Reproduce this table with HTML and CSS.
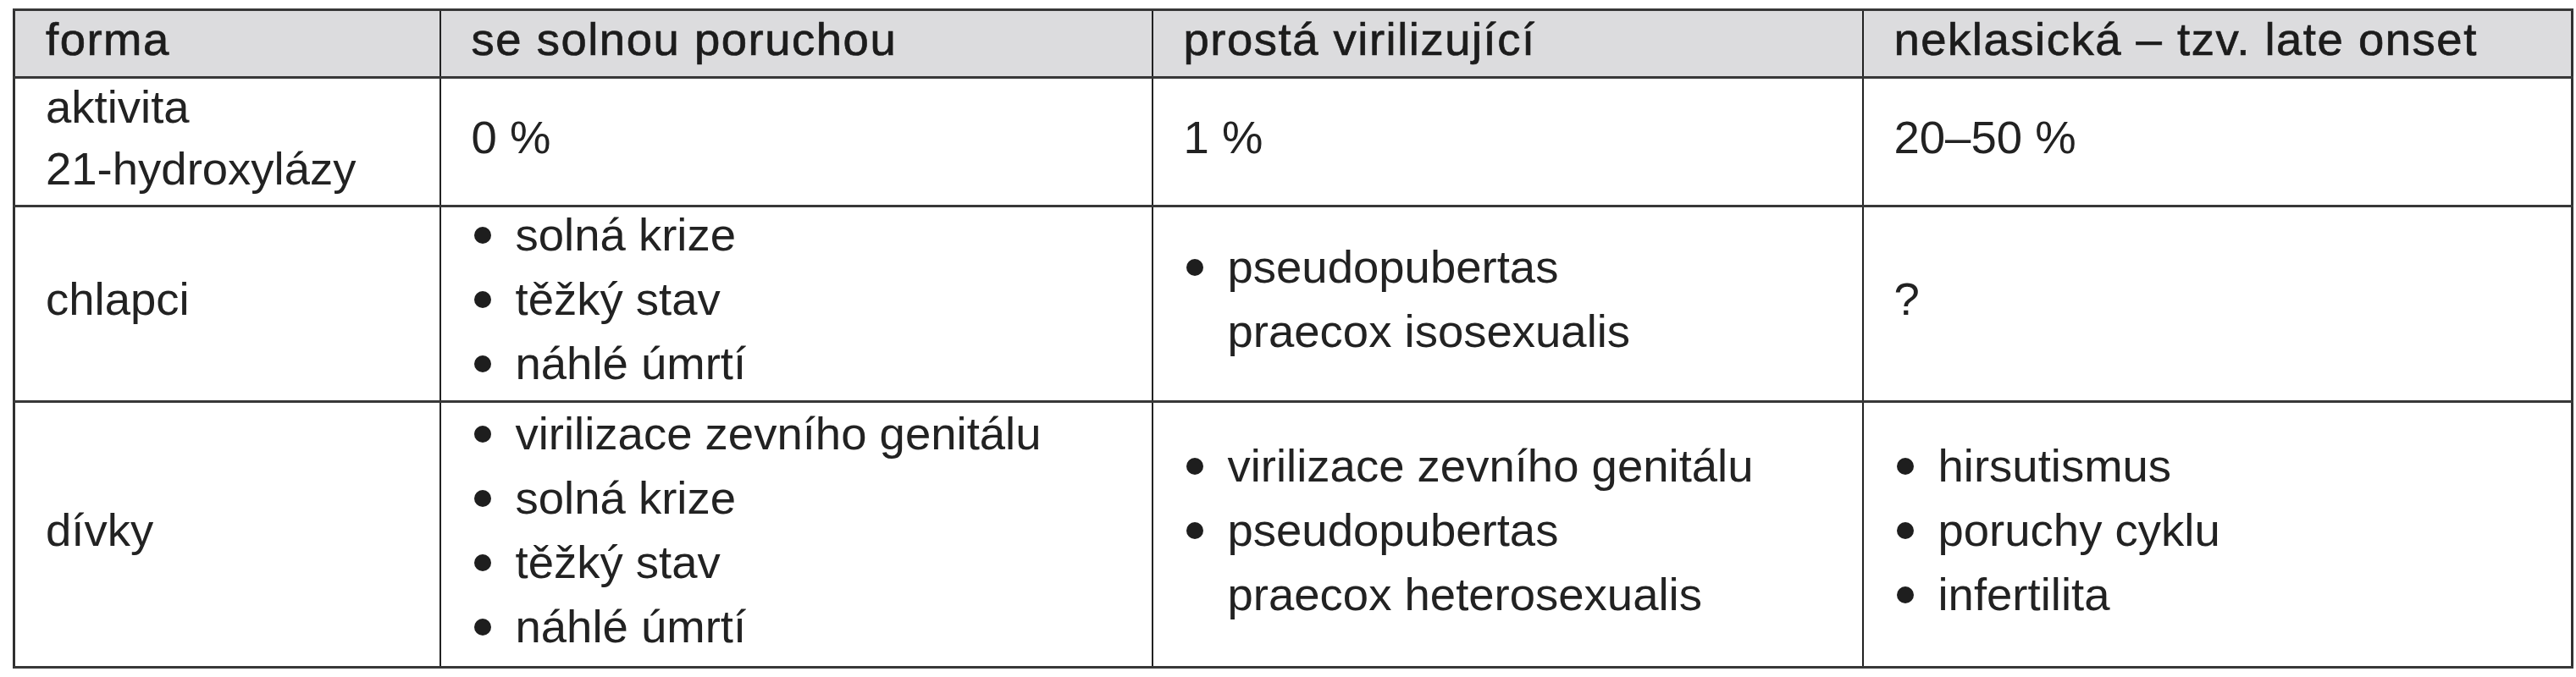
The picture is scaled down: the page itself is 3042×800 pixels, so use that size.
FILE: index.html
```html
<!DOCTYPE html>
<html lang="cs">
<head>
<meta charset="utf-8">
<title>Formy CAH</title>
<link rel="stylesheet" href="styles.css">
</head>
<body>
<table class="t">
  <colgroup>
    <col class="c1">
    <col class="c2">
    <col class="c3">
    <col class="c4">
  </colgroup>
  <thead>
    <tr class="rh">
      <th><div class="in">forma</div></th>
      <th><div class="in">se solnou poruchou</div></th>
      <th><div class="in">prostá virilizující</div></th>
      <th><div class="in">neklasická – tzv. late onset</div></th>
    </tr>
  </thead>
  <tbody>
    <tr class="r1">
      <td><div class="in tight">aktivita<br>21-hydroxylázy</div></td>
      <td><div class="in">0 %</div></td>
      <td><div class="in">1 %</div></td>
      <td><div class="in">20–50 %</div></td>
    </tr>
    <tr class="r2">
      <td><div class="in">chlapci</div></td>
      <td>
        <ul class="in list">
          <li><span>solná krize</span></li>
          <li><span>těžký stav</span></li>
          <li><span>náhlé úmrtí</span></li>
        </ul>
      </td>
      <td>
        <ul class="in list">
          <li><span>pseudopubertas<br>praecox isosexualis</span></li>
        </ul>
      </td>
      <td><div class="in">?</div></td>
    </tr>
    <tr class="r3">
      <td><div class="in">dívky</div></td>
      <td>
        <ul class="in list">
          <li><span>virilizace zevního genitálu</span></li>
          <li><span>solná krize</span></li>
          <li><span>těžký stav</span></li>
          <li><span>náhlé úmrtí</span></li>
        </ul>
      </td>
      <td>
        <ul class="in list">
          <li><span>virilizace zevního genitálu</span></li>
          <li><span>pseudopubertas<br>praecox heterosexualis</span></li>
        </ul>
      </td>
      <td>
        <ul class="in list">
          <li><span>hirsutismus</span></li>
          <li><span>poruchy cyklu</span></li>
          <li><span>infertilita</span></li>
        </ul>
      </td>
    </tr>
  </tbody>
</table>
</body>
</html>
```
FILE: styles.css
```css
html, body {
  margin: 0;
  padding: 0;
  background: #ffffff;
}

body {
  font-family: "Liberation Sans", Arial, sans-serif;
  color: #222222;
}

.t {
  margin: 10px 0 0 15px;
  width: 3024px;
  table-layout: fixed;
  border-collapse: collapse;
  border: 3px solid #303030;
}

.c1 { width: 503px; }
.c2 { width: 841px; }
.c3 { width: 839px; }

.t th,
.t td {
  padding: 0 30px 0 36px;
  vertical-align: middle;
  text-align: left;
  border-left: 2px solid #222222;
  border-right: 2px solid #222222;
  border-top: 3px solid #383838;
  border-bottom: 3px solid #383838;
  font-size: 54.5px;
  line-height: 76px;
  white-space: nowrap;
}

.t th {
  background: #dcdcde;
  font-weight: normal;
  color: #1c1c1c;
  letter-spacing: 1.5px;
  -webkit-text-stroke: 0.7px #1c1c1c;
}

.rh { height: 80px; }
.r1 { height: 152px; }
.r2 { height: 231px; }
.r3 { height: 314px; }

.in {
  margin: -5px 0 5px 0;
}

.tight {
  line-height: 73px;
}

.list {
  list-style: none;
  padding: 0;
}

.list li {
  display: flex;
  align-items: flex-start;
}

.list li::before {
  content: "";
  flex: 0 0 20px;
  height: 20px;
  margin: 28px 29px 0 3px;
  border-radius: 50%;
  background: #1e1e1e;
}
```
